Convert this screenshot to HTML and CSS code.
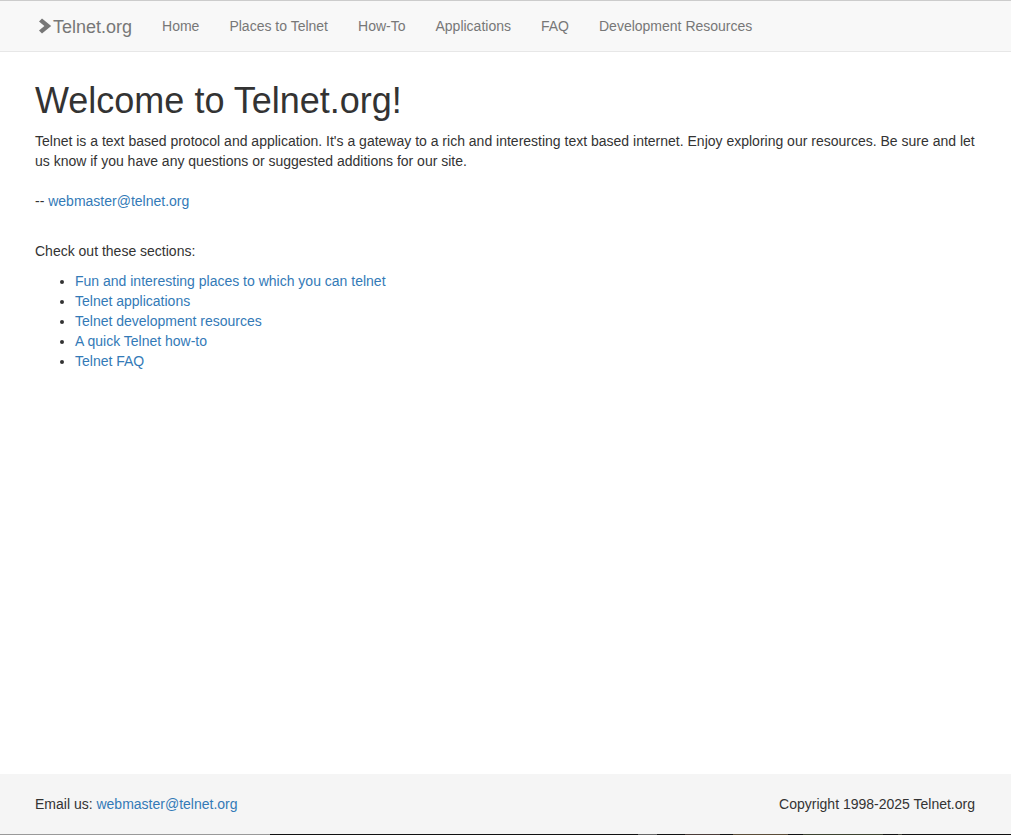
FILE: index.html
```html
<!DOCTYPE html>
<html lang="en">
<head>
<meta charset="utf-8">
<title>Telnet.org</title>
<link rel="stylesheet" href="styles.css">
</head>
<body>
<nav class="navbar">
  <a class="brand" href="#"><svg class="brand-icon" width="14" height="16" viewBox="0 0 14 16"><path d="M1 3.4 4 .4 13.2 8 4 15.6 1 12.6 6.4 8Z" fill="#777"/></svg>Telnet.org</a>
  <ul class="nav-list">
    <li><a href="#">Home</a></li>
    <li><a href="#">Places to Telnet</a></li>
    <li><a href="#">How-To</a></li>
    <li><a href="#">Applications</a></li>
    <li><a href="#">FAQ</a></li>
    <li><a href="#">Development Resources</a></li>
  </ul>
</nav>
<main class="content">
  <h1>Welcome to Telnet.org!</h1>
  <p class="intro">Telnet is a text based protocol and application. It's a gateway to a rich and interesting text based internet. Enjoy exploring our resources. Be sure and let us know if you have any questions or suggested additions for our site.</p>
  <p class="sign">-- <a href="#">webmaster@telnet.org</a></p>
  <p class="lead-in">Check out these sections:</p>
  <ul class="sections">
    <li><a href="#">Fun and interesting places to which you can telnet</a></li>
    <li><a href="#">Telnet applications</a></li>
    <li><a href="#">Telnet development resources</a></li>
    <li><a href="#">A quick Telnet how-to</a></li>
    <li><a href="#">Telnet FAQ</a></li>
  </ul>
</main>
<footer class="footer">
  <span>Email us: <a href="#">webmaster@telnet.org</a></span>
  <span>Copyright 1998-2025 Telnet.org</span>
</footer>
<div class="edge"></div>
</body>
</html>
```
FILE: styles.css
```css
* { box-sizing: border-box; }
html { background: #fff; }
body {
  margin: 0;
  display: flex;
  flex-direction: column;
  height: 835px;
  color: #333;
  font: 14px/20px "Liberation Sans", Arial, sans-serif;
}
a { color: #337ab7; text-decoration: none; }
.navbar {
  display: flex;
  height: 52px;
  flex: none;
  padding-left: 38px;
  background: #f8f8f8;
  border-top: 1px solid #ccc;
  border-bottom: 1px solid #e7e7e7;
}
.brand {
  display: flex;
  align-items: center;
  height: 50px;
  padding-top: 2px;
  font-size: 18px;
  color: #777;
  margin-right: 15px;
}
.brand-icon { margin-right: 1px; margin-top: -3px; }
.nav-list { display: flex; list-style: none; margin: 0; padding: 0; }
.nav-list a { display: block; padding: 15px; color: #777; }
.content { flex: 1; padding: 0 36px 0 35px; }
h1 {
  margin: 29px 0 10px;
  font-size: 36px;
  line-height: 40px;
  font-weight: 500;
}
.intro { margin: 0; }
.sign { margin: 20px 0 0; }
.lead-in { margin: 30px 0 0; }
.sections { margin: 10px 0 0; padding-left: 40px; }
.footer {
  flex: none;
  height: 60px;
  display: flex;
  justify-content: space-between;
  align-items: center;
  padding: 0 36px 0 35px;
  background: #f5f5f5;
}
.edge {
  flex: none;
  height: 1px;
  background: linear-gradient(to right,
    #999 270px, #111 270px,
    #111 638px, #666 638px, #666 657px, #111 657px,
    #111 685px, #4a3c38 685px, #4a3c38 720px, #111 720px,
    #111 733px, #5a4c38 733px, #5a4c38 788px, #111 788px,
    #111 803px, #3c4230 803px, #3c4230 883px, #111 883px,
    #111 898px, #4a4a3e 898px, #4a4a3e 902px, #111 902px);
}
```
